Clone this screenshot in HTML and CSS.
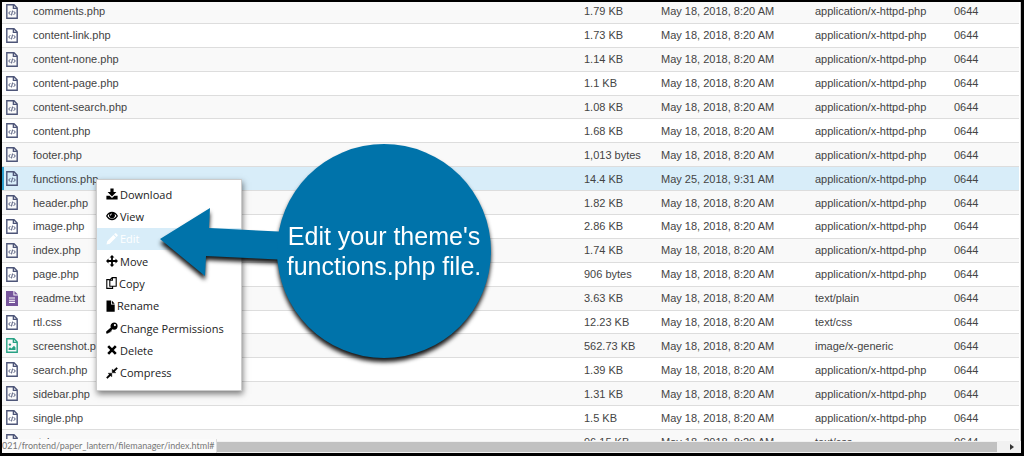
FILE: index.html
```
<!DOCTYPE html>
<html lang="en">
<head>
    <meta charset="UTF-8">
    <meta name="viewport" content="width=device-width, initial-scale=1.0">
    <title>File Manager</title>
    <link rel="stylesheet" href="styles.css">
</head>
<body>
    <svg class="sprite" aria-hidden="true">
        <symbol id="file-code" viewBox="0 0 12 15">
            <path d="M.8 .8H8L11.2 4V14.2H.8ZM7.4 .8V4.4H11.2" fill="none" stroke="#4d5578" stroke-width="1.4"/>
            <path d="M4.3 7.2L2.7 9L4.3 10.8M7.7 7.2L9.3 9L7.7 10.8M6.5 6.6L5.5 11.4" fill="none" stroke="#4d5578" stroke-width="1"/>
        </symbol>
        <symbol id="file-text" viewBox="0 0 12 15">
            <path d="M0 0H7.4V4.6H12V15H0ZM8.4 0L12 3.6H8.4Z" fill="#76559b"/>
            <path d="M3 7H9M3 9.2H9M3 11.4H9" stroke="#fff" stroke-width="1.1"/>
        </symbol>
        <symbol id="file-image" viewBox="0 0 12 15">
            <path d="M.8 .8H8L11.2 4V14.2H.8ZM7.4 .8V4.4H11.2" fill="none" stroke="#27a184" stroke-width="1.4"/>
            <path d="M2.6 12V10.4L4 9.2L5.4 10.4L8 7.8L9.5 9.4V12Z" fill="#27a184"/>
            <circle cx="3.9" cy="6.6" r="1.2" fill="#27a184"/>
        </symbol>
    </svg>

    <main class="pane">
        <div class="list">
            <table class="files">
                <colgroup>
                    <col class="col-icon"><col><col class="col-size"><col class="col-date"><col class="col-type"><col class="col-perm">
                </colgroup>
                <tbody>
                    <tr><td><svg class="file-icon"><use href="#file-code"/></svg></td><td>comments.php</td><td>1.79 KB</td><td>May 18, 2018, 8:20 AM</td><td>application/x-httpd-php</td><td>0644</td></tr>
                    <tr><td><svg class="file-icon"><use href="#file-code"/></svg></td><td>content-link.php</td><td>1.73 KB</td><td>May 18, 2018, 8:20 AM</td><td>application/x-httpd-php</td><td>0644</td></tr>
                    <tr><td><svg class="file-icon"><use href="#file-code"/></svg></td><td>content-none.php</td><td>1.14 KB</td><td>May 18, 2018, 8:20 AM</td><td>application/x-httpd-php</td><td>0644</td></tr>
                    <tr><td><svg class="file-icon"><use href="#file-code"/></svg></td><td>content-page.php</td><td>1.1 KB</td><td>May 18, 2018, 8:20 AM</td><td>application/x-httpd-php</td><td>0644</td></tr>
                    <tr><td><svg class="file-icon"><use href="#file-code"/></svg></td><td>content-search.php</td><td>1.08 KB</td><td>May 18, 2018, 8:20 AM</td><td>application/x-httpd-php</td><td>0644</td></tr>
                    <tr><td><svg class="file-icon"><use href="#file-code"/></svg></td><td>content.php</td><td>1.68 KB</td><td>May 18, 2018, 8:20 AM</td><td>application/x-httpd-php</td><td>0644</td></tr>
                    <tr><td><svg class="file-icon"><use href="#file-code"/></svg></td><td>footer.php</td><td>1,013 bytes</td><td>May 18, 2018, 8:20 AM</td><td>application/x-httpd-php</td><td>0644</td></tr>
                    <tr class="selected"><td><svg class="file-icon"><use href="#file-code"/></svg></td><td>functions.php</td><td>14.4 KB</td><td>May 25, 2018, 9:31 AM</td><td>application/x-httpd-php</td><td>0644</td></tr>
                    <tr><td><svg class="file-icon"><use href="#file-code"/></svg></td><td>header.php</td><td>1.82 KB</td><td>May 18, 2018, 8:20 AM</td><td>application/x-httpd-php</td><td>0644</td></tr>
                    <tr><td><svg class="file-icon"><use href="#file-code"/></svg></td><td>image.php</td><td>2.86 KB</td><td>May 18, 2018, 8:20 AM</td><td>application/x-httpd-php</td><td>0644</td></tr>
                    <tr><td><svg class="file-icon"><use href="#file-code"/></svg></td><td>index.php</td><td>1.74 KB</td><td>May 18, 2018, 8:20 AM</td><td>application/x-httpd-php</td><td>0644</td></tr>
                    <tr><td><svg class="file-icon"><use href="#file-code"/></svg></td><td>page.php</td><td>906 bytes</td><td>May 18, 2018, 8:20 AM</td><td>application/x-httpd-php</td><td>0644</td></tr>
                    <tr><td><svg class="file-icon"><use href="#file-text"/></svg></td><td>readme.txt</td><td>3.63 KB</td><td>May 18, 2018, 8:20 AM</td><td>text/plain</td><td>0644</td></tr>
                    <tr><td><svg class="file-icon"><use href="#file-code"/></svg></td><td>rtl.css</td><td>12.23 KB</td><td>May 18, 2018, 8:20 AM</td><td>text/css</td><td>0644</td></tr>
                    <tr><td><svg class="file-icon"><use href="#file-image"/></svg></td><td>screenshot.png</td><td>562.73 KB</td><td>May 18, 2018, 8:20 AM</td><td>image/x-generic</td><td>0644</td></tr>
                    <tr><td><svg class="file-icon"><use href="#file-code"/></svg></td><td>search.php</td><td>1.39 KB</td><td>May 18, 2018, 8:20 AM</td><td>application/x-httpd-php</td><td>0644</td></tr>
                    <tr><td><svg class="file-icon"><use href="#file-code"/></svg></td><td>sidebar.php</td><td>1.31 KB</td><td>May 18, 2018, 8:20 AM</td><td>application/x-httpd-php</td><td>0644</td></tr>
                    <tr><td><svg class="file-icon"><use href="#file-code"/></svg></td><td>single.php</td><td>1.5 KB</td><td>May 18, 2018, 8:20 AM</td><td>application/x-httpd-php</td><td>0644</td></tr>
                    <tr><td><svg class="file-icon"><use href="#file-code"/></svg></td><td>style.css</td><td>96.15 KB</td><td>May 18, 2018, 8:20 AM</td><td>text/css</td><td>0644</td></tr>
                </tbody>
            </table>
        </div>

        <div class="scrollbar">
            <div class="thumb"></div>
            <svg class="scroll-arrow" viewBox="0 0 4 6"><path d="M0 0L4 3L0 6Z" fill="#333"/></svg>
        </div>
        <div class="status">021/frontend/paper_lantern/filemanager/index.html#</div>
    </main>

    <nav class="menu">
        <a href="#"><svg viewBox="0 0 12 12"><path d="M4.4 .5H7.6V4H10.4L6 8.4L1.6 4H4.4ZM.4 7.8H3.6L6 10L8.4 7.8H11.6V11.5H.4Z"/></svg>Download</a>
        <a href="#"><svg viewBox="0 0 12 12"><path fill-rule="evenodd" d="M0 6Q2.4 1.8 6 1.8T12 6Q9.6 10.2 6 10.2T0 6ZM1.5 6Q3.2 8.9 6 8.9T10.5 6Q9.8 4.8 8.6 4.1A3 3 0 1 1 3.4 4.1Q2.2 4.8 1.5 6ZM6 3.4A2 2 0 0 0 4 5.4H5A1 1 0 0 1 6 4.2Z"/></svg>View</a>
        <a href="#" class="active"><svg viewBox="0 0 12 12"><path d="M.5 11.5L1.2 8.2L7.4 2L10 4.6L3.8 10.8ZM8.1 1.3L9.2 .3Q9.6 0 10 .3L11.7 2Q12 2.4 11.7 2.8L10.7 3.9Z"/></svg>Edit</a>
        <a href="#"><svg viewBox="0 0 12 12"><path d="M6 0L8.4 2.5H6.9V5.1H9.5V3.6L12 6L9.5 8.4V6.9H6.9V9.5H8.4L6 12L3.6 9.5H5.1V6.9H2.5V8.4L0 6L2.5 3.6V5.1H5.1V2.5H3.6Z"/></svg>Move</a>
        <a href="#"><svg class="narrow" viewBox="0 0 11 12"><path d="M3.6 2.6H.8V11.4H6.6V9.4M6.2 .6H10.2V9.2H3.8V3ZM6.4 .8V3.2H4" fill="none" stroke="#000" stroke-width="1.1"/></svg>Copy</a>
        <a href="#"><svg class="slim" viewBox="0 0 9 12"><path d="M.5 .5H5V4.5H8.7V11.7H.5ZM5.8 .5L8.7 3.7H5.8Z"/></svg>Rename</a>
        <a href="#"><svg viewBox="0 0 12 12"><path fill-rule="evenodd" d="M8 .5A3.6 3.6 0 0 1 8 7.7Q7.2 7.7 6.5 7.3L5.5 8.3V9.4H4.3V10.6H3L2 11.6H.2V9.4L4.8 5.6A3.6 3.6 0 0 1 8 .5ZM8.9 2A1.1 1.1 0 1 0 8.9 4.2A1.1 1.1 0 1 0 8.9 2Z"/></svg>Change Permissions</a>
        <a href="#"><svg viewBox="0 0 12 12"><path d="M2.2 2.2L9.8 9.8M9.8 2.2L2.2 9.8" fill="none" stroke="#000" stroke-width="2.6"/></svg>Delete</a>
        <a href="#"><svg viewBox="0 0 12 12"><path d="M6.2 2.2L7.4 3.2L10.6 .4L11.6 1.4L8.7 4.6L9.8 5.8H6.2ZM2.2 6.2H5.8V9.8L4.6 8.7L1.4 11.6L.4 10.6L3.2 7.4Z" stroke="#000" stroke-width=".4"/></svg>Compress</a>
    </nav>

    <aside class="callout">
        <svg class="pointer" viewBox="0 0 130 70"><path d="M1 32L51 1L50 21L130 25V53L47 49L46 69Z"/></svg>
        <p class="bubble">Edit your theme's<br>functions.php file.</p>
    </aside>
</body>
</html>
```
FILE: styles.css
```
* {
    box-sizing: border-box;
}
body {
    margin: 0;
    height: 100vh;
    position: relative;
    overflow: hidden;
    background: #fff;
    font-family: "Liberation Sans", Arial, sans-serif;
    font-size: 11px;
    color: #444;
}
.sprite {
    display: none;
}
.pane {
    position: relative;
    height: 100%;
    display: flex;
    flex-direction: column;
    overflow: hidden;
    border: 2px solid #000;
    border-width: 2px 3px 3px 2px;
}

/* file list */
.list {
    flex: 1;
    min-height: 0;
    overflow: hidden;
    border-right: 1px solid #ccc;
}
.files {
    width: calc(100% - 1px);
    height: calc(100vh - 2px);
    margin-top: -2px;
    table-layout: fixed;
    border-collapse: separate;
    border-spacing: 0;
}
.col-icon {
    width: 31px;
}
.col-size {
    width: 77px;
}
.col-date {
    width: 154px;
}
.col-type {
    width: 139px;
}
.col-perm {
    width: 65px;
}
.files td {
    padding: 0;
    line-height: 20px;
    border-bottom: 1px solid #ddd;
    white-space: nowrap;
}
.files tr:nth-child(odd) {
    background: #f9f9f9;
}
.files .selected {
    background: #d8edf9;
}
.files .selected td:first-child {
    box-shadow: inset 2px 0 #2f9fd0;
}
.file-icon {
    display: block;
    width: 12px;
    height: 15px;
    margin-left: 4px;
}

/* bottom bars */
.scrollbar {
    height: 12px;
    display: flex;
    align-items: center;
    background: #f1f1f1;
}
.thumb {
    flex: 1;
    height: 10px;
    background: #c1c1c1;
}
.scroll-arrow {
    width: 4px;
    height: 6px;
    margin: 0 7px 0 13px;
}
.status {
    position: absolute;
    left: 0;
    bottom: 0;
    height: 14px;
    padding-right: 2px;
    line-height: 13px;
    background: #fbfbfb;
    border-right: 1px solid #ddd;
    color: #777;
    font-family: Lato, sans-serif;
    font-size: 9px;
}

/* context menu */
.menu {
    position: absolute;
    left: 96px;
    top: 179px;
    width: 146px;
    height: 212px;
    padding: 3px 0 6px;
    display: flex;
    flex-direction: column;
    background: #fff;
    border: 1px solid #ccc;
    box-shadow: 1px 3px 6px rgba(0, 0, 0, 0.5);
    font-family: "Open Sans", sans-serif;
}
.menu a {
    flex: 1;
    display: flex;
    align-items: center;
    gap: 2px;
    padding-left: 9px;
    color: #222;
    text-decoration: none;
}
.menu svg {
    width: 12px;
    height: 12px;
    fill: #000;
}
.menu .narrow {
    width: 11px;
}
.menu .slim {
    width: 9px;
}
.menu .active {
    background: #d8edf9;
    color: #fff;
}
.menu .active svg {
    fill: #fff;
}

/* callout */
.callout {
    position: absolute;
    left: 159px;
    top: 144px;
    display: flex;
    align-items: center;
    filter: drop-shadow(0 4px 2px rgba(0, 0, 0, 0.9));
}
.pointer {
    width: 130px;
    height: 70px;
    margin-right: -12px;
    margin-bottom: 18px;
    fill: #0073aa;
}
.bubble {
    width: 214px;
    height: 214px;
    margin: 0;
    display: flex;
    align-items: center;
    justify-content: center;
    border-radius: 50%;
    background: #0073aa;
    color: #fff;
    font-size: 25px;
    line-height: 30px;
    text-align: center;
    white-space: nowrap;
}
```
